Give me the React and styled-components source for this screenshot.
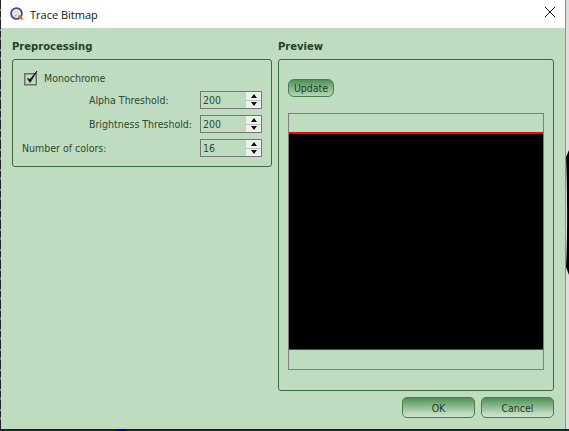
import React from "react";
import styled, { createGlobalStyle } from "styled-components";

const Global = createGlobalStyle`
  html, body { margin: 0; padding: 0; width: 569px; height: 431px; overflow: hidden; background: #1f2428; }
  * { box-sizing: border-box; }
`;
const Screen = styled.div`
  width: 569px; height: 431px; position: relative; overflow: hidden; background: #1f2428;
  display: flex; flex-direction: column;
`;
const Desktop = styled.div` height: 429px; display: flex; `;
const LeftEdge = styled.div`
  width: 1px;
  background: repeating-linear-gradient(180deg, #1f2428 0 9px, #8a8f8a 9px 11px, #1f2428 11px 17px, #6d726d 17px 20px);
`;
const RightEdge = styled.div`
  width: 4px; display: flex; background: #dedede; border-left: 1px solid #8e8e8e;
`;
const Taskbar = styled.div`
  position: absolute; left: 116px; bottom: 0; width: 10px; height: 2px; background: #00009a;
`;
const Dialog = styled.div`
  width: 564px; height: 429px; display: flex; flex-direction: column; background: #c0dcc0;
  font-family: "DejaVu Sans Condensed", "DejaVu Sans", sans-serif; font-stretch: condensed;
  font-size: 10.5px; color: #2a4a2a;
`;
const TitleBar = styled.div`
  height: 28px; background: #fff; display: flex; align-items: center; padding: 0 0 0 9px; gap: 6px;
  font-family: "Open Sans", sans-serif; font-stretch: normal; font-size: 11px; color: #111;
`;
const Title = styled.span` flex: 1; `;
const Close = styled.div` width: 14px; height: 14px; margin-right: 8px; margin-top: -4px; display: flex; `;
const Body = styled.div`
  flex: 1; display: grid; grid-template-columns: 260px 276px; gap: 6px; padding: 12px 10px 0 11px;
`;
const Column = styled.div` display: flex; flex-direction: column; `;
const Heading = styled.div`
  font-family: "DejaVu Sans", sans-serif; font-stretch: normal;
  font-weight: 700; font-size: 10px; color: #234223; height: 19px; line-height: 13px;
`;
const Group = styled.div`
  border: 1px solid #3e6b3e; border-radius: 3px;
`;
const PreGroup = styled(Group)`
  height: 108px; padding: 7px 9px 0 9px; display: flex; flex-direction: column;
`;
const PreviewGroup = styled(Group)`
  height: 332px; padding: 19px 9px 0 9px; display: flex; flex-direction: column; align-items: stretch;
`;
const CheckRow = styled.div` display: flex; align-items: center; gap: 5px; height: 22px; padding-left: 1px; `;
const Row = styled.div`
  display: flex; align-items: center; height: 24px; justify-content: space-between;
  padding-left: ${p => p.$indent || 0}px;
  margin-top: ${p => p.$mt || 0}px;
`;
const Spin = styled.div`
  width: 62px; height: 18px; border: 1px solid #777; display: flex;
  background: #c0dcc0; align-items: stretch;
`;
const SpinValue = styled.span` flex: 1; padding-left: 2px; line-height: 16px; `;
const SpinButtons = styled.div`
  width: 16px; display: flex; flex-direction: column; background: #e8ede8; border-left: 1px solid #c8d0c8;
`;
const SpinBtn = styled.div`
  flex: 1; display: flex; align-items: center; justify-content: center; background: #eef0ee;
  border-bottom: ${p => p.$top ? "1px solid #b9c4b9" : "none"};
`;
const Up = styled.i`
  width: 0; height: 0; border-left: 3.5px solid transparent; border-right: 3.5px solid transparent;
  border-bottom: 4px solid #111;
`;
const Down = styled.i`
  width: 0; height: 0; border-left: 3.5px solid transparent; border-right: 3.5px solid transparent;
  border-top: 4px solid #111;
`;
const Button = styled.div`
  display: flex; align-items: center; justify-content: center; color: #1e3a1e;
  border: 1px solid #4a7d4a; border-radius: 5px;
  background: linear-gradient(180deg, #4f8f57 0%, #7fb184 35%, #c4dcc4 85%, #c8e0c8 100%);
`;
const UpdateBtn = styled(Button)`
  width: 46px; height: 18px; align-self: flex-start; border-radius: 6px;
  background: linear-gradient(180deg, #4f8f57 0%, #86b98b 50%, #b5d4b5 100%);
`;
const Preview = styled.div`
  margin-top: 16px; height: 257px; border: 1px solid #808080; display: flex; flex-direction: column;
`;
const Gap = styled.div` height: 18px; `;
const GapB = styled.div` flex: 1; `;
const Canvas = styled.div`
  height: 218px; background: #000; border-top: 2px solid #ff0000; border-bottom: 1px solid #a82424;
`;
const Footer = styled.div`
  height: 38px; display: flex; justify-content: flex-end; gap: 6px; padding: 6px 11px 0 0;
`;
const FootBtn = styled(Button)` width: 73px; height: 21px; `;

const QIcon = () => (
  <svg width="14" height="14" viewBox="0 0 14 14">
    <circle cx="6.5" cy="6.5" r="5.4" fill="#e4e8f0" stroke="#3a4a8a" strokeWidth="1.8" />
    <circle cx="6.5" cy="5.5" r="2.2" fill="#f4e2a8" />
    <path d="M4 9.5 L7 7.5" stroke="#9aa6c8" strokeWidth="1" />
    <path d="M8.5 8.5 L12.5 12.5" stroke="#d9762a" strokeWidth="2" />
  </svg>
);
const Check = () => (
  <svg width="16" height="16" viewBox="0 0 16 16" style={{ flexShrink: 0 }}>
    <rect x="1.75" y="3.75" width="11.5" height="11" fill="none" stroke="#6a6f6a" strokeWidth="1.5" />
    <path d="M4.5 8.5 L7 12.5 L14 1 L7 9.5 Z" fill="#111" stroke="#111" strokeWidth="0.8" />
  </svg>
);
const Blob = () => (
  <svg width="3" height="429" viewBox="0 0 3 429">
    <path d="M0 157 L3 150 L3 275 L0 267 C1.5 240 1.5 190 0 157 Z" fill="#000" />
  </svg>
);
const SpinBox = ({ value }) => (
  <Spin>
    <SpinValue>{value}</SpinValue>
    <SpinButtons>
      <SpinBtn $top><Up /></SpinBtn>
      <SpinBtn><Down /></SpinBtn>
    </SpinButtons>
  </Spin>
);

export default function App() {
  return (
    <Screen>
      <Global />
      <Desktop>
        <LeftEdge />
        <Dialog>
          <TitleBar>
            <QIcon />
            <Title>Trace Bitmap</Title>
            <Close>
              <svg width="14" height="14" viewBox="0 0 14 14">
                <path d="M2 2 L12 12 M12 2 L2 12" stroke="#111" strokeWidth="1" />
              </svg>
            </Close>
          </TitleBar>
          <Body>
            <Column>
              <Heading>Preprocessing</Heading>
              <PreGroup>
                <CheckRow><Check /><span>Monochrome</span></CheckRow>
                <Row $mt={-1} $indent={67}><span>Alpha Threshold:</span><SpinBox value="200" /></Row>
                <Row $indent={67}><span>Brightness Threshold:</span><SpinBox value="200" /></Row>
                <Row><span>Number of colors:</span><SpinBox value="16" /></Row>
              </PreGroup>
            </Column>
            <Column>
              <Heading>Preview</Heading>
              <PreviewGroup>
                <UpdateBtn>Update</UpdateBtn>
                <Preview>
                  <Gap />
                  <Canvas />
                  <GapB />
                </Preview>
              </PreviewGroup>
            </Column>
          </Body>
          <Footer>
            <FootBtn>OK</FootBtn>
            <FootBtn>Cancel</FootBtn>
          </Footer>
        </Dialog>
        <RightEdge><Blob /></RightEdge>
      </Desktop>
      <Taskbar />
    </Screen>
  );
}
